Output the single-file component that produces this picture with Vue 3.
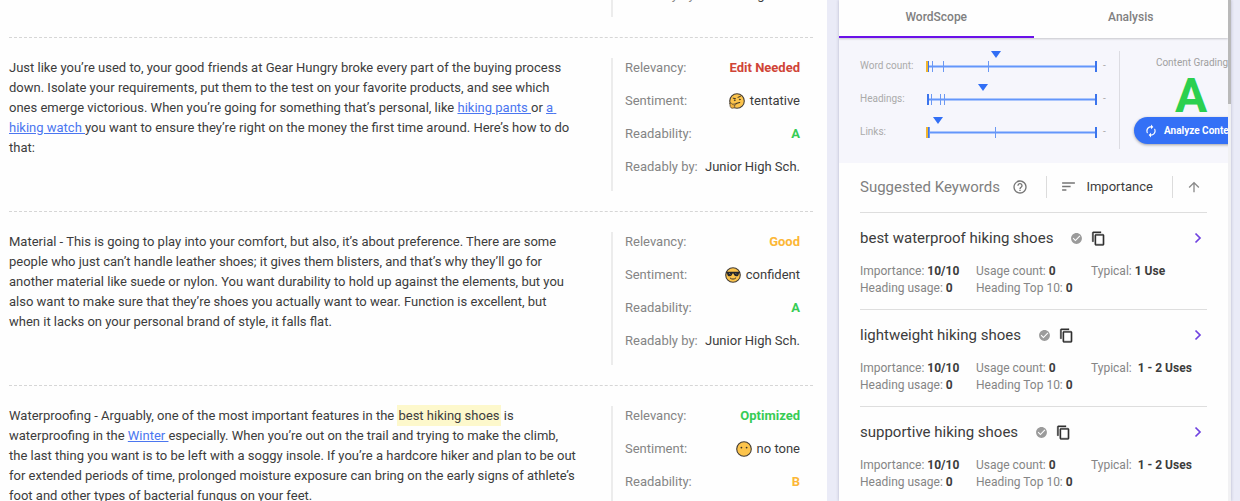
<script setup>
const blocks = [
  { id: 0, parts: [], partial: true },
  {
    id: 1,
    parts: [
      { text: 'Just like you’re used to, your good friends at Gear Hungry broke every part of the buying process down. Isolate your requirements, put them to the test on your favorite products, and see which ones emerge victorious. When you’re going for something that’s personal, like ' },
      { text: 'hiking pants ', kind: 'link' },
      { text: 'or ' },
      { text: 'a hiking watch ', kind: 'link' },
      { text: 'you want to ensure they’re right on the money the first time around. Here’s how to do that:' },
    ],
    relevancy: 'Edit Needed', tone: 'bad', mood: 'tentative', grade: 'A',
  },
  {
    id: 2,
    parts: [
      { text: 'Material - This is going to play into your comfort, but also, it’s about preference. There are some people who just can’t handle leather shoes; it gives them blisters, and that’s why they’ll go for another material like suede or nylon. You want durability to hold up against the elements, but you also want to make sure that they’re shoes you actually want to wear. Function is excellent, but when it lacks on your personal brand of style, it falls flat.' },
    ],
    relevancy: 'Good', tone: 'warn', mood: 'confident', grade: 'A',
  },
  {
    id: 3,
    parts: [
      { text: 'Waterproofing - Arguably, one of the most important features in the ' },
      { text: 'best hiking shoes', kind: 'mark' },
      { text: ' is waterproofing in the ' },
      { text: 'Winter ', kind: 'link' },
      { text: 'especially. When you’re out on the trail and trying to make the climb, the last thing you want is to be left with a soggy insole. If you’re a hardcore hiker and plan to be out for extended periods of time, prolonged moisture exposure can bring on the early signs of athlete’s foot and other types of bacterial fungus on your feet.' },
    ],
    relevancy: 'Optimized', tone: 'ok', mood: 'no tone', grade: 'B', last: true,
  },
]

const gauges = [
  { name: 'Word count:', gold: true, ticks: [7, 18, 63], pointer: 72 },
  { name: 'Headings:', gold: false, ticks: [6, 15, 19], pointer: 59 },
  { name: 'Links:', gold: true, ticks: [4, 70], pointer: 14 },
]

const keywords = [
  { name: 'best waterproof hiking shoes', typical: '1 Use' },
  { name: 'lightweight hiking shoes', typical: '\u00a01 - 2 Uses' },
  { name: 'supportive hiking shoes', typical: '\u00a01 - 2 Uses' },
]
</script>

<template>
  <div class="page">
    <main class="editor">
      <div class="feed">
        <section v-for="b in blocks" :key="b.id" class="block">
          <p class="copy">
            <template v-for="(p, i) in b.parts" :key="i"><a v-if="p.kind === 'link'" href="#">{{ p.text }}</a><mark v-else-if="p.kind === 'mark'">{{ p.text }}</mark><template v-else>{{ p.text }}</template></template>
          </p>
          <dl class="metrics" :class="{ partial: b.partial }">
            <template v-if="!b.partial">
              <div><dt>Relevancy:</dt><dd class="strong" :class="b.tone">{{ b.relevancy }}</dd></div>
              <div>
                <dt>Sentiment:</dt>
                <dd class="mood">
                  <svg viewBox="0 0 16 16" width="16" height="16" aria-hidden="true">
                    <circle cx="8" cy="8" r="7.3" fill="#fcc44c" stroke="#443d36" stroke-width="1.1" />
                    <g v-if="b.mood === 'tentative'" fill="none" stroke="#3c3429" stroke-linecap="round">
                      <path d="M4.2 5.2 6.4 5.6M9 4.3l2.4-.9" stroke-width="1" />
                      <circle cx="5.7" cy="7.2" r=".5" fill="#3c3429" stroke-width=".5" />
                      <circle cx="10.8" cy="6.5" r=".5" fill="#3c3429" stroke-width=".5" />
                      <path d="M7 10.5 10.7 9.5" stroke-width="1.1" />
                      <path d="M1 10.2C2.2 9.3 3 10.6 3.3 11.3L6.4 10.9C7.3 11 7 12 6.2 12.1L5 12.4C6.6 13.8 4.8 15.4 3 15.2 1.2 14.8.7 12.8 1 10.2Z" fill="#f2b33c" stroke="#554733" stroke-width=".8" />
                    </g>
                    <g v-else-if="b.mood === 'confident'">
                      <path d="M1.2 4.7h13.6v1.4l-.9.4C13.7 8.5 12.9 9.3 11.3 9.3 9.7 9.3 8.9 8.2 8.5 6.6h-1C7.1 8.2 6.3 9.3 4.7 9.3 3.1 9.3 2.3 8.5 2.1 6.5l-.9-.4Z" fill="#25272b" />
                      <path d="m4 6 1.5 1.5M10.3 6l1.5 1.5" stroke="#8a8a86" stroke-width=".7" />
                      <path d="M5.2 11.1c1.7 1.5 4 1.4 5.6-.1" fill="none" stroke="#3c3429" stroke-linecap="round" />
                    </g>
                    <g v-else fill="#3c3429"><circle cx="5.4" cy="6.6" r=".9" /><circle cx="10.6" cy="6.6" r=".9" /></g>
                  </svg>
                  {{ b.mood }}
                </dd>
              </div>
              <div><dt>Readability:</dt><dd class="strong" :class="b.grade === 'A' ? 'ok' : 'warn'">{{ b.grade }}</dd></div>
            </template>
            <div v-if="!b.last"><dt>Readably by:</dt><dd>Junior High Sch.</dd></div>
          </dl>
        </section>
      </div>
    </main>

    <aside class="panel">
      <div class="content">
        <nav class="tabs">
          <button type="button" class="active">WordScope</button>
          <button type="button">Analysis</button>
        </nav>

        <section class="scores">
          <div class="gauges">
            <div v-for="g in gauges" :key="g.name" class="gauge">
              <span>{{ g.name }}</span>
              <svg viewBox="0 0 172 24" width="172" height="24" aria-hidden="true">
                <path d="M1 15.5h170" stroke="#6396fb" stroke-width="2" />
                <path v-for="t in g.ticks" :key="t" :d="`M${t - 0.5} 10v11`" stroke="#6b98f3" stroke-width="1" />
                <path d="M2 10v11M170 10v11" stroke="#3b74ec" stroke-width="2" />
                <path v-if="g.gold" d="M1 10v11" stroke="#f1b62f" stroke-width="2" />
                <path :d="`M${g.pointer - 7} 0h10l-5 7z`" fill="#326ff5" />
              </svg>
              <i>-</i>
            </div>
          </div>
          <div class="grading">
            <span>Content Grading</span>
            <strong>A</strong>
            <button type="button">
              <svg viewBox="0 0 24 24" width="14" height="14" fill="#fff" aria-hidden="true">
                <path d="M12 6v3l4-4-4-4v3c-4.42 0-8 3.58-8 8 0 1.57.46 3.03 1.24 4.26L6.7 14.8A5.87 5.87 0 0 1 6 12c0-3.31 2.69-6 6-6zm6.76 1.74L17.3 9.2c.44.84.7 1.79.7 2.8 0 3.31-2.69 6-6 6v-3l-4 4 4 4v-3c4.42 0 8-3.58 8-8 0-1.57-.46-3.03-1.24-4.26z" />
              </svg>
              Analyze Content
            </button>
          </div>
        </section>

        <section class="suggested">
          <header>
            <h2>Suggested Keywords</h2>
            <button type="button" class="help" aria-label="Help">
              <svg viewBox="0 0 24 24" width="16" height="16" fill="#757575"><path d="M11 18h2v-2h-2v2zm1-16C6.48 2 2 6.48 2 12s4.48 10 10 10 10-4.48 10-10S17.52 2 12 2zm0 18c-4.41 0-8-3.59-8-8s3.59-8 8-8 8 3.59 8 8-3.59 8-8 8zm0-14c-2.21 0-4 1.79-4 4h2c0-1.1.9-2 2-2s2 .9 2 2c0 2-3 1.75-3 5h2c0-2.25 3-2.5 3-5 0-2.21-1.79-4-4-4z" /></svg>
            </button>
            <button type="button" class="sort">
              <svg viewBox="0 0 24 24" width="17" height="17" fill="#757575"><path d="M3 18h6v-2H3v2zM3 6v2h18V6H3zm0 7h12v-2H3v2z" /></svg>
              Importance
            </button>
            <button type="button" class="dir" aria-label="Ascending">
              <svg viewBox="0 0 24 24" width="16" height="16" fill="#8a8a8a"><path d="M4 12l1.41 1.41L11 7.83V20h2V7.83l5.58 5.59L20 12l-8-8-8 8z" /></svg>
            </button>
          </header>

          <article v-for="k in keywords" :key="k.name">
            <div class="title">
              <h3>{{ k.name }}</h3>
              <svg viewBox="0 0 24 24" width="13" height="13" fill="#9b9b9b" aria-hidden="true"><path d="M12 2C6.48 2 2 6.48 2 12s4.48 10 10 10 10-4.48 10-10S17.52 2 12 2zm-2 15l-5-5 1.41-1.41L10 14.17l7.59-7.59L19 8l-9 9z" /></svg>
              <button type="button" aria-label="Copy">
                <svg viewBox="0 0 24 24" width="15" height="15" fill="#303030" stroke="#303030" stroke-width=".6"><path d="M16 1H4c-1.1 0-2 .9-2 2v14h2V3h12V1zm3 4H8c-1.1 0-2 .9-2 2v14c0 1.1.9 2 2 2h11c1.1 0 2-.9 2-2V7c0-1.1-.9-2-2-2zm0 16H8V7h11v14z" /></svg>
              </button>
              <button type="button" class="open" aria-label="Details">
                <svg viewBox="0 0 8 12" width="8" height="12"><path d="M1.5 1.5 6 6l-4.5 4.5" fill="none" stroke="#6f42e0" stroke-width="1.7" /></svg>
              </button>
            </div>
            <div class="stats">
              <span>Importance: <b>10/10</b></span>
              <span>Usage count: <b>0</b></span>
              <span>Typical: <b>{{ k.typical }}</b></span>
              <span>Heading usage: <b>0</b></span>
              <span>Heading Top 10: <b>0</b></span>
            </div>
          </article>
        </section>
      </div>
      <div class="scrollbar"></div>
    </aside>
  </div>
</template>

<style>
body {
  margin: 0;
  overflow: hidden;
}
</style>

<style scoped>
.page {
  display: grid;
  grid-template-columns: minmax(0, 1fr) 392px;
  gap: 12px;
  height: 100vh;
  padding-right: 9px;
  box-sizing: border-box;
  background: #eaebf7;
  font-family: Roboto, "Liberation Sans", sans-serif;
  color: #3c3c3c;
}
button {
  padding: 0;
  border: 0;
  background: none;
  font: inherit;
  color: inherit;
}
svg {
  display: block;
  flex: none;
}
.editor {
  overflow: hidden;
  background: #fefefe;
  padding: 0 14px 0 9px;
}
.feed {
  margin-top: -38px;
}
.block {
  display: grid;
  grid-template-columns: minmax(0, 1fr) 202px;
  gap: 32px;
  padding: 20px 0;
  border-top: 1px dashed #d6d6d6;
}
.copy {
  margin: 0;
  font-size: 13px;
  line-height: 20px;
}
.copy a {
  color: #4b76f0;
  white-space: pre-wrap;
}
mark {
  background: #fdf8cc;
  color: inherit;
  padding: 3px 1px;
}
.metrics {
  margin: 0;
  height: 133px;
  box-sizing: border-box;
  padding: 0 13px 0 12px;
  border-left: 2px solid #ececec;
  font-size: 13px;
  line-height: 20px;
}
.metrics.partial {
  height: 34px;
  padding-top: 2px;
}
.metrics > div {
  display: flex;
  justify-content: space-between;
  margin-bottom: 13px;
  white-space: nowrap;
}
.metrics.partial > div {
  margin-bottom: 0;
}
dt {
  color: #858585;
}
dd {
  margin: 0;
}
.mood {
  display: flex;
  align-items: center;
  gap: 5px;
}
.strong {
  font-weight: 700;
}
.bad { color: #d04437; }
.warn { color: #fcb737; }
.ok { color: #37cc55; }

.panel {
  display: flex;
  overflow: hidden;
  background: #fefefe;
  box-shadow: 0 0 3px rgba(60, 60, 100, 0.3);
}
.content {
  flex: 1;
  min-width: 0;
  overflow: hidden;
}
.scrollbar {
  width: 3px;
  background: linear-gradient(#b9b9b9 104px, #f1f1f3 104px);
}
.tabs {
  position: relative;
  display: flex;
  height: 38px;
  box-shadow: 0 1px 2px rgba(0, 0, 0, 0.2);
}
.tabs button {
  flex: 1;
  padding-bottom: 3px;
  border-bottom: 2px solid transparent;
  font-size: 12px;
  font-weight: 500;
  color: #808080;
}
.tabs .active {
  border-color: #6a11e8;
}
.scores {
  display: flex;
  height: 125px;
  box-sizing: border-box;
  padding: 13px 0 14px 21px;
  background: #f6f6fc;
  font-size: 10px;
  color: #aaaaaa;
}
.gauges {
  flex: none;
  width: 259px;
  border-right: 1px solid #dcdce2;
}
.gauge {
  display: flex;
  height: 33px;
}
.gauge span {
  width: 66px;
  line-height: 30px;
}
.gauge i {
  padding-left: 5px;
  font-style: normal;
  line-height: 30px;
}
.grading {
  flex: none;
  display: flex;
  flex-direction: column;
  align-items: center;
  width: 116px;
  padding-left: 14px;
  white-space: nowrap;
}
.grading span {
  line-height: 24px;
  color: #a0a0a0;
}
.grading strong {
  margin-right: 2px;
  font-size: 48px;
  line-height: 41px;
  font-weight: 700;
  color: #2bd04f;
}
.grading button {
  display: flex;
  align-items: center;
  align-self: stretch;
  gap: 6px;
  height: 27px;
  flex: none;
  margin-top: 1px;
  padding: 0 10px;
  border-radius: 14px;
  background: #3470f6;
  box-shadow: 0 1px 3px rgba(0, 0, 0, 0.35);
  color: #fff;
  font-weight: 700;
}
.suggested {
  padding: 0 21px;
}
.suggested header {
  display: flex;
  align-items: center;
  height: 47px;
  padding-bottom: 2px;
}
h2 {
  margin: 0;
  font-size: 15px;
  font-weight: 400;
  color: #808080;
}
.help {
  margin-left: 12px;
}
.sort {
  display: flex;
  align-items: center;
  gap: 9px;
  height: 22px;
  margin-left: auto;
  padding: 0 19px 0 13px;
  border-left: 1px solid #dcdcdc;
  border-right: 1px solid #dcdcdc;
  font-size: 13px;
}
.dir {
  padding: 0 5px 0 13px;
}
article {
  height: 97px;
  box-sizing: border-box;
  padding-top: 14px;
  border-top: 1px solid #dedede;
}
.title {
  display: flex;
  align-items: center;
  height: 22px;
}
h3 {
  margin: 0 17px 0 0;
  font-size: 15px;
  font-weight: 400;
}
.title button {
  margin-left: 8px;
}
.title .open {
  margin-left: auto;
  margin-right: 5px;
}
.stats {
  display: grid;
  grid-template-columns: 116px 115px 1fr;
  margin-top: 14px;
  font-size: 12px;
  line-height: 17px;
  color: #858585;
  white-space: nowrap;
}
.stats b {
  font-weight: 700;
  color: #3c3c3c;
}
</style>
